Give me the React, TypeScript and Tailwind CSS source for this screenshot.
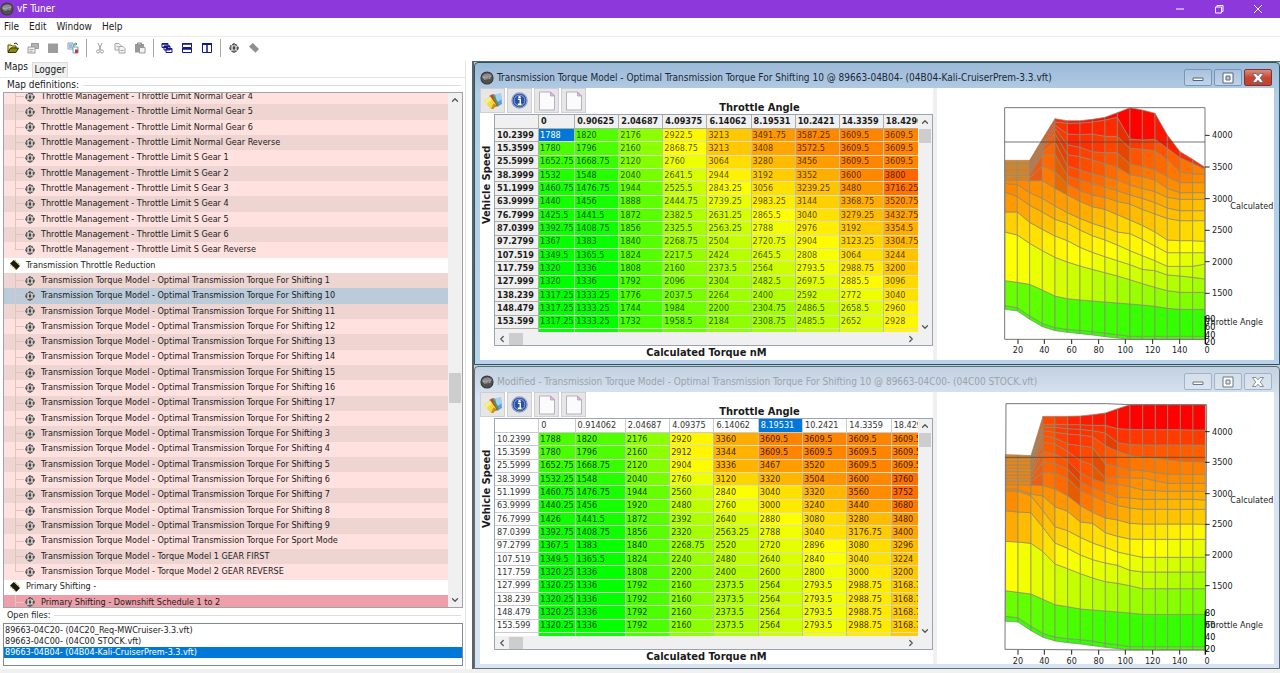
import React from 'react';
import clsx from 'clsx';
import { ChevronDown, ChevronLeft, ChevronRight, ChevronUp } from 'lucide-react';

const LIMIT = 'Throttle Management - Throttle Limit';
const TORQUE = 'Transmission Torque Model - Optimal Transmission Torque For';

type Row = { label: string; tone: string; group?: boolean; last?: boolean };

const LIGHT = 'bg-[#ffe2e0]';
const DARK = 'bg-[#eed5d2]';

const stripe = (labels: string[], darkFirst: boolean): Row[] =>
  labels.map((label, i) => ({
    label,
    tone: (i % 2 === 0) === darkFirst ? DARK : LIGHT,
    last: i === labels.length - 1,
  }));

const treeRows: Row[] = [
  ...stripe(
    ['Normal Gear 4', 'Normal Gear 5', 'Normal Gear 6', 'Normal Gear Reverse', 'S Gear 1', 'S Gear 2', 'S Gear 3', 'S Gear 4', 'S Gear 5', 'S Gear 6', 'S Gear Reverse'].map(
      (s) => `${LIMIT} ${s}`
    ),
    false
  ),
  { label: 'Transmission Throttle Reduction', tone: 'bg-white', group: true },
  ...stripe(
    [
      ...['1', '10', '11', '12', '13', '14', '15', '16', '17', '2', '3', '4', '5', '6', '7', '8', '9'].map((n) => `${TORQUE} Shifting ${n}`),
      `${TORQUE} Sport Mode`,
      'Transmission Torque Model - Torque Model 1 GEAR FIRST',
      'Transmission Torque Model - Torque Model 2 GEAR REVERSE',
    ],
    true
  ),
  { label: 'Primary Shifting -', tone: 'bg-white', group: true },
  { label: 'Primary Shifting - Downshift Schedule 1 to 2', tone: 'bg-[#eea0aa]' },
];

const SELECTED_ROW = `${TORQUE} Shifting 10`;

const openFiles = ['89663-04C20- (04C20_Req-MWCruiser-3.3.vft)', '89663-04C00- (04C00 STOCK.vft)', '89663-04B04- (04B04-Kali-CruiserPrem-3.3.vft)'];

const speeds = ['10.2399', '15.3599', '25.5999', '38.3999', '51.1999', '63.9999', '76.7999', '87.0399', '97.2799', '107.519', '117.759', '127.999', '138.239', '148.479', '153.599'];

const tunedMap = {
  angles: ['0', '0.90625', '2.04687', '4.09375', '6.14062', '8.19531', '10.2421', '14.3359', '18.4296'],
  values: [
    [1788, 1820, 2176, 2922.5, 3213, 3491.75, 3587.25, 3609.5, 3609.5],
    [1780, 1796, 2160, 2868.75, 3213, 3408, 3572.5, 3609.5, 3609.5],
    [1652.75, 1668.75, 2120, 2760, 3064, 3280, 3456, 3609.5, 3609.5],
    [1532, 1548, 2040, 2641.5, 2944, 3192, 3352, 3600, 3800],
    [1460.75, 1476.75, 1944, 2525.5, 2843.25, 3056, 3239.25, 3480, 3716.25],
    [1440, 1456, 1888, 2444.75, 2739.25, 2983.25, 3144, 3368.75, 3520.75],
    [1425.5, 1441.5, 1872, 2382.5, 2631.25, 2865.5, 3040, 3279.25, 3432.75],
    [1392.75, 1408.75, 1856, 2325.5, 2563.25, 2788, 2976, 3192, 3354.5],
    [1367, 1383, 1840, 2268.75, 2504, 2720.75, 2904, 3123.25, 3304.75],
    [1349.5, 1365.5, 1824, 2217.5, 2424, 2645.5, 2808, 3064, 3244],
    [1320, 1336, 1808, 2160, 2373.5, 2564, 2793.5, 2988.75, 3200],
    [1320, 1336, 1792, 2096, 2304, 2482.5, 2697.5, 2885.5, 3096],
    [1317.25, 1333.25, 1776, 2037.5, 2264, 2400, 2592, 2772, 3040],
    [1317.25, 1333.25, 1744, 1984, 2200, 2304.75, 2486.5, 2658.5, 2960],
    [1317.25, 1333.25, 1732, 1958.5, 2184, 2308.75, 2485.5, 2652, 2928],
  ],
};

const stockMap = {
  angles: ['0', '0.914062', '2.04687', '4.09375', '6.14062', '8.19531', '10.2421', '14.3359', '18.4296'],
  values: [
    [1788, 1820, 2176, 2920, 3360, 3609.5, 3609.5, 3609.5, 3609.5],
    [1780, 1796, 2160, 2912, 3344, 3609.5, 3609.5, 3609.5, 3609.5],
    [1652.75, 1668.75, 2120, 2904, 3336, 3467, 3520, 3609.5, 3609.5],
    [1532.25, 1548, 2040, 2760, 3120, 3320, 3504, 3600, 3760],
    [1460.75, 1476.75, 1944, 2560, 2840, 3040, 3320, 3560, 3752],
    [1440.25, 1456, 1920, 2480, 2760, 3000, 3240, 3440, 3680],
    [1426, 1441.5, 1872, 2392, 2640, 2880, 3080, 3280, 3480],
    [1392.75, 1408.75, 1856, 2320, 2563.25, 2788, 3040, 3176.75, 3400],
    [1367.5, 1383, 1840, 2268.75, 2520, 2720, 2896, 3080, 3296],
    [1349.5, 1365.5, 1824, 2240, 2480, 2640, 2840, 3040, 3224],
    [1320.25, 1336, 1808, 2200, 2400, 2600, 2800, 3000, 3200],
    [1320.25, 1336, 1792, 2160, 2373.5, 2564, 2793.5, 2988.75, 3168.75],
    [1320.25, 1336, 1792, 2160, 2373.5, 2564, 2793.5, 2988.75, 3168.75],
    [1320.25, 1336, 1792, 2160, 2373.5, 2564, 2793.5, 2988.75, 3168.75],
    [1320.25, 1336, 1792, 2160, 2373.5, 2564, 2793.5, 2988.75, 3168.75],
  ],
};

// green at 1320 Nm, yellow around 2870, red at 4420
const heat = (value: number) => {
  const hue = Math.max(0, Math.min(120, 120 - ((value - 1320) / 3100) * 120));
  return `hsl(${Math.round(hue)} 100% 50%)`;
};

type Surface = {
  xs: number[];
  curves: number[][];
  hues: number[][];
  frame: string;
  cut: string;
  ticks: [string, number][];
  depth: [string, number][];
  axisY: number;
  nameY: number;
  depthNameY: number;
};

// Each curve is one throttle line, listed bottom to top; units are thirds of a pixel.
const tunedSurface: Surface = {
  xs: [45, 82, 119, 157, 195, 232, 270, 307, 345, 382, 420, 457, 495, 532, 570, 608, 645],
  curves: [
    [748, 753, 778, 800, 812, 817, 821, 825, 830, 834, 838, 838, 838, 838, 838, 838, 838],
    [737, 743, 768, 790, 803, 808, 811, 815, 819, 824, 829, 829, 829, 829, 829, 829, 829],
    [662, 667, 673, 690, 708, 716, 720, 723, 726, 729, 732, 735, 739, 745, 748, 748, 748],
    [516, 525, 550, 572, 592, 606, 618, 628, 638, 648, 659, 671, 682, 692, 697, 697, 697],
    [456, 456, 487, 508, 528, 542, 562, 577, 590, 602, 614, 628, 632, 645, 648, 652, 657],
    [396, 410, 436, 456, 478, 490, 510, 527, 540, 555, 572, 587, 602, 619, 619, 619, 612],
    [370, 374, 398, 415, 438, 458, 475, 490, 502, 516, 521, 538, 558, 578, 578, 578, 578],
    [360, 360, 362, 362, 385, 405, 424, 440, 448, 464, 480, 496, 516, 540, 542, 542, 544],
    [353, 353, 353, 318, 335, 372, 392, 405, 412, 424, 432, 448, 462, 475, 482, 482, 482],
    [345, 345, 345, 283, 283, 348, 360, 370, 382, 392, 405, 415, 428, 444, 452, 452, 452],
    [337, 337, 337, 275, 245, 318, 330, 342, 350, 360, 375, 385, 395, 412, 418, 418, 418],
    [330, 330, 330, 268, 220, 284, 290, 300, 312, 322, 345, 350, 360, 385, 398, 398, 398],
    [323, 323, 323, 262, 205, 254, 262, 275, 278, 278, 312, 320, 330, 350, 368, 368, 368],
    [316, 316, 316, 255, 195, 222, 224, 222, 229, 229, 265, 268, 272, 300, 336, 342, 342],
    [309, 309, 309, 247, 186, 190, 189, 186, 180, 172, 237, 240, 238, 265, 293, 310, 328],
    [301, 301, 301, 238, 176, 182, 182, 178, 172, 158, 143, 150, 160, 225, 275, 298, 322],
  ],
  hues: [
    [106, 110, 106, 103],
    [95, 103, 107, 108],
    [60, 72, 84, 91],
    [49, 60, 71, 82],
    [36, 53, 65, 74],
    [32, 46, 58, 68],
    [31, 38, 53, 62],
    [30, 28, 44, 53],
    [30, 22, 40, 48],
    [30, 18, 36, 45],
    [30, 14, 32, 41],
    [30, 12, 26, 37],
    [30, 9, 20, 33],
    [30, 6, 13, 30],
    [30, 5, 0, 12],
  ],
  frame: 'M44 143H645V838H44Z',
  cut: 'M44 246H645',
  ticks: [['4000', 226], ['3500', 321], ['3000', 416], ['2500', 511], ['2000', 605], ['1500', 700]],
  depth: [['80', 776], ['60', 801], ['40', 825], ['20', 847]],
  axisY: 838,
  nameY: 438,
  depthNameY: 787,
};

const stockSurface: Surface = {
  xs: [46, 84, 123, 159, 195, 233, 271, 308, 346, 383, 420, 458, 496, 533, 571, 609, 646],
  curves: [
    [772, 774, 800, 820, 831, 836, 840, 845, 850, 854, 858, 858, 858, 858, 858, 858, 858],
    [757, 761, 787, 808, 819, 824, 827, 831, 838, 842, 848, 848, 848, 848, 848, 848, 848],
    [680, 685, 690, 706, 722, 728, 735, 738, 741, 744, 747, 751, 751, 751, 751, 751, 751],
    [532, 534, 538, 563, 600, 614, 629, 642, 653, 658, 665, 674, 674, 674, 674, 674, 674],
    [440, 444, 446, 490, 537, 553, 573, 587, 597, 604, 619, 624, 624, 624, 624, 624, 624],
    [380, 382, 395, 440, 488, 500, 520, 537, 550, 564, 572, 580, 580, 580, 580, 580, 580],
    [374, 376, 390, 396, 428, 442, 474, 478, 506, 517, 525, 526, 526, 526, 526, 526, 526],
    [362, 362, 363, 365, 375, 395, 425, 445, 462, 468, 478, 480, 480, 480, 480, 480, 481],
    [352, 352, 352, 325, 328, 343, 380, 395, 412, 424, 432, 436, 436, 436, 436, 436, 436],
    [343, 343, 343, 293, 300, 315, 355, 372, 385, 400, 402, 406, 406, 406, 406, 406, 408],
    [333, 333, 333, 262, 270, 290, 328, 345, 358, 362, 368, 378, 380, 382, 382, 382, 382],
    [323, 323, 323, 235, 240, 262, 290, 303, 342, 340, 342, 342, 350, 358, 358, 358, 358],
    [313, 313, 313, 215, 222, 240, 245, 250, 300, 308, 318, 320, 325, 331, 331, 331, 331],
    [303, 303, 303, 200, 205, 210, 213, 218, 245, 262, 275, 280, 282, 287, 292, 293, 294],
    [292, 292, 292, 190, 190, 194, 196, 200, 207, 236, 242, 243, 243, 243, 243, 243, 244],
    [282, 282, 282, 182, 182, 182, 182, 184, 184, 194, 196, 197, 197, 197, 197, 198, 198],
    [272, 273, 275, 157, 157, 157, 156, 152, 147, 134, 122, 122, 122, 122, 122, 122, 122],
  ],
  hues: [
    [106, 110, 106, 103],
    [95, 103, 107, 108],
    [60, 74, 84, 91],
    [40, 62, 72, 82],
    [33, 54, 65, 74],
    [31, 48, 58, 66],
    [31, 36, 52, 58],
    [31, 24, 44, 48],
    [31, 20, 40, 45],
    [31, 17, 37, 41],
    [31, 15, 34, 37],
    [31, 13, 31, 34],
    [31, 11, 28, 30],
    [31, 10, 20, 22],
    [31, 9, 13, 14],
    [31, 8, 0, 0],
  ],
  frame: 'M48 119H350L420 122H650L646 858H350L45 856Z',
  cut: 'M46 280H646',
  ticks: [['4000', 203], ['3500', 295], ['3000', 389], ['2500', 481], ['2000', 573], ['1500', 665]],
  depth: [['80', 748], ['60', 783], ['40', 819], ['20', 856]],
  axisY: 858,
  nameY: 409,
  depthNameY: 783,
};

const speedTicks: [string, number][] = [['20', 84], ['40', 163], ['60', 245], ['80', 326], ['100', 406], ['120', 488], ['140', 569]];

const cellHue = (stops: number[], col: number) => {
  const t = Math.min(col, 15) / 5;
  const i = Math.min(2, Math.floor(t));
  return Math.round(stops[i] + (stops[i + 1] - stops[i]) * (t - i));
};

function SurfaceChart({ surface, label }: { surface: Surface; label: string }) {
  const { xs, curves, hues } = surface;
  const px = (x: number) => 53 + x / 3;
  const py = (y: number) => y / 3 - 28;
  return (
    <svg viewBox="0 0 337 272" preserveAspectRatio="xMidYMin meet" className="block h-full w-full overflow-hidden text-[9px]" role="img" aria-label={label}>
      <g transform="translate(53 -28) scale(0.33333)" strokeLinejoin="round">
        {hues.map((stops, band) =>
          xs.slice(0, -1).map((x, col) => {
            const low = curves[band];
            const high = curves[band + 1];
            const slope = (high[col + 1] - high[col]) / (xs[col + 1] - x);
            const early = band > 6 && col < 3;
            const hue = early ? stops[0] - (col === 2 ? 10 : 0) : cellHue(stops, col);
            const steep = slope > 0.75 && band > 6 && col < 10;
            return (
              <polygon
                key={`${band}-${col}`}
                points={`${x},${low[col]} ${xs[col + 1]},${low[col + 1]} ${xs[col + 1]},${high[col + 1]} ${x},${high[col]}`}
                fill={`hsl(${hue} ${early ? 85 : 100}% ${steep ? 45 : 50}%)`}
                stroke="#8a8a74"
                strokeWidth="2.2"
              />
            );
          })
        )}
        <path d={surface.frame} fill="none" stroke="#777" strokeWidth="3" />
        <path d={surface.cut} fill="none" stroke="#444" strokeOpacity="0.75" strokeWidth="3" />
        {surface.ticks.map(([t, y]) => (
          <path key={t} d={`M645 ${y}h14`} stroke="#222" strokeWidth="3" />
        ))}
        {speedTicks.map(([t, x]) => (
          <path key={t} d={`M${x} ${surface.axisY}v14`} stroke="#222" strokeWidth="3" />
        ))}
        <path d={`M646 ${surface.depth[0][1] - 8}V${surface.axisY + 14}`} stroke="#111" strokeWidth="4" />
      </g>
      <g fill="#222">
        {surface.ticks.map(([t, y]) => (
          <text key={t} x={px(666)} y={py(y) + 3}>{t}</text>
        ))}
        {surface.depth.map(([t, y]) => (
          <text key={t} x={px(645)} y={py(y) + 3} fill="#000">{t}</text>
        ))}
        {speedTicks.map(([t, x]) => (
          <text key={t} x={px(x)} y={py(surface.axisY) + 14} textAnchor="middle">{t}</text>
        ))}
        <text x={px(651)} y={py(surface.axisY) + 14} textAnchor="middle">0</text>
        <text x={px(850)} y={py(surface.nameY) + 3} textAnchor="end">Calculated</text>
        <text x={px(647)} y={py(surface.depthNameY) + 3}>Throttle Angle</text>
      </g>
    </svg>
  );
}

function AppBadge() {
  return (
    <svg viewBox="0 0 14 14" className="size-3.5 shrink-0" aria-hidden="true">
      <circle cx="7" cy="7" r="6.6" fill="#3a3a3c" />
      <circle cx="7" cy="7" r="5.6" fill="#505052" />
      <path d="M2 5.5C4 2 9 1.5 12 4.5L11 6 3 8z" fill="#8b8b8d" />
      <path d="M3 6.2h2.5M4 8h2.5M7 5.5v2.8M8.500 6h2.500M8.500 7.600h1.800" stroke="#c4c4c6" strokeWidth="0.800" />
    </svg>
  );
}

function TargetIcon() {
  return (
    <svg viewBox="0 0 12 12" className="size-3 shrink-0" fill="none" aria-hidden="true">
      <circle cx="6" cy="6" r="3.8" fill="#d4d0d0" stroke="#5a5454" strokeWidth="1.300" strokeDasharray="2.200 0.900" />
      <path d="M6 1v2.500M6 8.500V11M1 6h2.500M8.500 6H11" stroke="#444" strokeWidth="1.100" />
      <path d="M6 4.300v3.400M4.800 6h2.400" stroke="#222" strokeWidth="1.200" />
    </svg>
  );
}

function ChipIcon({ muted }: { muted?: boolean }) {
  return (
    <svg viewBox="0 0 12 12" className="size-3 shrink-0" aria-hidden="true">
      <path d="M1 4.500 4.800 1 11 7 7.500 10.800z" fill={muted ? '#8e8e8e' : '#1a1a10'} />
      {!muted && <path d="M1.500 5.800 6.800 11M5.800 1.200l5.400 5" stroke="#b8b020" strokeWidth="1.100" strokeDasharray="1.200 1" />}
    </svg>
  );
}

const toolIcons: Record<string, React.ReactNode> = {
  Open: (
    <>
      <path d="M1 3h3l1 1h4v2H4L1 10z" fill="#f5ee7c" stroke="#4c4a00" />
      <path d="M1 10.500 3.500 6h8L9 10.500z" fill="#8c8a12" stroke="#3c3a00" />
      <path d="M7 2c1.500-1.500 3-1 3.500.8" fill="none" stroke="#222" />
    </>
  ),
  Properties: (
    <>
      <path d="M4.500 1.500h7v5h-7z" fill="#b4b4b4" stroke="#999" />
      <path d="M1 5h7v6H1z" fill="#eee" stroke="#999" />
      <path d="M2.500 7.500h4M2.500 9.300h3" stroke="#aaa" />
    </>
  ),
  Save: <path d="M1 1.500h10v9.500H1z" fill="#9c9c9c" />,
  Compare: (
    <>
      <path d="M1 1h5v6H1z" fill="#fff" stroke="#7a9cc8" />
      <path d="M6 5h5v6H6z" fill="#fff" stroke="#7a9cc8" />
      <path d="M2 3h3M2 5h3" stroke="#3d76b8" />
      <path d="M7 4.500V2h3M8.500.800 10 2 8.500 3.200" fill="none" stroke="#3f9a3f" />
      <path d="M8 7.500h3v3.500H8z" fill="#d03838" />
    </>
  ),
  Cut: (
    <g fill="none" stroke="#a0a0a0">
      <path d="M4 1l3 7M8 1 5 8" />
      <circle cx="4" cy="9.500" r="1.500" />
      <circle cx="8" cy="9.500" r="1.500" />
    </g>
  ),
  Copy: (
    <g fill="#f4f4f4" stroke="#a4a4a4">
      <path d="M1 1.500h4l2 2v4.500H1z" />
      <path d="M5 4.500h4l2 2V11H5z" />
      <path d="M2.500 4.500h2M6.500 8.500h3" />
    </g>
  ),
  Paste: (
    <>
      <path d="M1 2h9v8.500H1z" fill="#9a9a9a" />
      <path d="M3.500 1h4v2h-4z" fill="#ccc" stroke="#888" />
      <path d="M5.500 5.500h5.500V11H5.500z" fill="#f2f2f2" stroke="#999" />
    </>
  ),
  Cascade: (
    <g fill="#fff" stroke="#14148c">
      <path d="M1 1.500h6v4H1zM3 4h6v4H3zM5 6.500h6v4H5z" />
      <path d="M1 2h6M3 4.500h6M5 7h6" strokeWidth="1.500" />
    </g>
  ),
  'Tile horizontally': (
    <g fill="#fff" stroke="#14148c">
      <path d="M1.500 1.500h9v4h-9zM1.500 6.500h9v4h-9z" />
      <path d="M1 2h10M1 7h10" strokeWidth="1.500" />
    </g>
  ),
  'Tile vertically': (
    <g fill="#fff" stroke="#14148c">
      <path d="M1.500 1.500h4.500v9H1.500zM6 1.500h4.500v9H6z" />
      <path d="M1 2h10" strokeWidth="2" />
    </g>
  ),
};

const toolGroups = [
  ['Open', 'Properties', 'Save', 'Compare'],
  ['Cut', 'Copy', 'Paste'],
  ['Cascade', 'Tile horizontally', 'Tile vertically'],
  ['Target', 'Chip'],
];

function Toolbar() {
  return (
    <div className="flex h-[22px] shrink-0 items-center border-t border-[#ececec] pl-[3px]">
      {toolGroups.map((group, i) => (
        <React.Fragment key={group[0]}>
          {i > 0 && <span className="mx-[3px] h-[18px] w-px bg-[#a8a8a8]" />}
          {group.map((name) => (
            <button key={name} type="button" aria-label={name} className="flex h-5 w-5 items-center justify-center">
              {name === 'Target' && <TargetIcon />}
              {name === 'Chip' && <ChipIcon muted />}
              {toolIcons[name] && (
                <svg viewBox="0 0 12 12" className="size-3" aria-hidden="true">
                  {toolIcons[name]}
                </svg>
              )}
            </button>
          ))}
        </React.Fragment>
      ))}
    </div>
  );
}

function Sidebar() {
  return (
    <aside className="flex w-[466px] shrink-0 flex-col border-r border-[#e4e4e4]">
      <div className="flex h-[17px] shrink-0 items-end border-b border-[#e4e4e4] text-[10px] leading-none" role="tablist">
        <button type="button" role="tab" aria-selected="true" className="h-4 w-8 pb-1 text-center">Maps</button>
        <button type="button" role="tab" aria-selected="false" className="h-[15px] w-9 border border-b-0 border-[#dcdcdc] bg-[#f0f0f0]">Logger</button>
      </div>
      <h2 className="flex h-[14px] shrink-0 items-center pl-[7px] text-[10px] leading-none">
        Map definitions:<span className="mx-1 h-px flex-1 bg-[#dcdcdc]" />
      </h2>
      <div className="mr-0.5 ml-[3px] flex min-h-0 flex-1 border border-[#a0a4aa]">
        <div className="min-w-0 flex-1 overflow-hidden">
          <ul className="-mt-1 flex h-[521px] flex-col" role="tree" aria-label="Map definitions">
            {treeRows.map((row) => (
              <li
                key={row.label}
                role="treeitem"
                aria-selected={row.label === SELECTED_ROW}
                className={clsx('flex min-h-0 flex-1 items-center whitespace-nowrap', row.label === SELECTED_ROW ? 'bg-[#bccbda]' : row.tone)}
              >
                {row.group ? (
                  <>
                    <span className="mx-[5px] flex"><ChipIcon /></span>
                    {row.label}
                  </>
                ) : (
                  <>
                    <span className={clsx('ml-[11px] w-px self-start bg-[#e0c4c2]', row.last ? 'h-1/2' : 'h-full')} />
                    <span className="h-px w-2 bg-[#e0c4c2]" />
                    <TargetIcon />
                    <span className="ml-[5px]">{row.label}</span>
                  </>
                )}
              </li>
            ))}
          </ul>
        </div>
        <div className="flex w-[14px] shrink-0 flex-col items-center bg-[#f0f0f0] py-0.5">
          <ChevronUp size={10} strokeWidth={3} color="#555" />
          <div className="mt-[268px] h-[30px] w-3 bg-[#cdcdcd]" />
          <ChevronDown size={10} strokeWidth={3} color="#555" className="mt-auto" />
        </div>
      </div>
      <h2 className="flex h-[15px] shrink-0 items-center pl-[7px] leading-none">
        Open files:<span className="mx-1 h-px flex-1 bg-[#dcdcdc]" />
      </h2>
      <ul className="mr-0.5 mb-[3px] ml-[3px] h-[43px] shrink-0 border border-[#828790] pt-px" role="listbox" aria-label="Open files">
        {openFiles.map((file, i) => (
          <li
            key={file}
            role="option"
            aria-selected={i === 2}
            className={clsx('h-[11px] pl-px leading-[11px]', i === 2 && 'bg-[#0078d7] text-white')}
          >
            {file}
          </li>
        ))}
      </ul>
    </aside>
  );
}

type MapData = typeof tunedMap;

function MapTable({ map, active }: { map: MapData; active: boolean }) {
  const line = active ? 'border-[#a9b0a9]' : 'border-[#c9ccd2]';
  return (
    <div className="flex min-h-0 min-w-0 flex-1 flex-col border border-[#9aa4b4] bg-[#f0f0f0]">
      <div className="flex h-[217px] shrink-0">
        <div className="min-w-0 flex-1 overflow-hidden">
          <table className={clsx('h-[217px] table-fixed border-separate border-spacing-0 leading-none', active ? 'w-[433px]' : 'w-[441px]')}>
            <colgroup>
              <col className="w-[44px]" />
              <col className="w-[36px]" />
              <col className={active ? 'w-[44px]' : 'w-[50px]'} />
              {map.angles.slice(2).map((a) => (
                <col key={a} className="w-[44px]" />
              ))}
            </colgroup>
            <thead>
              <tr className="h-[14px]">
                <th className={clsx('border-b border-r p-0', line, !active && 'bg-white')} />
                {map.angles.map((a, i) => (
                  <th
                    key={a}
                    scope="col"
                    className={clsx(
                      'overflow-hidden whitespace-nowrap border-b border-r p-0 pl-0.5 text-left',
                      line,
                      active ? 'bg-[#f0f0f0] font-bold' : i === 5 ? 'bg-[#0078d7] font-normal text-white' : 'bg-white font-normal text-[#333]'
                    )}
                  >
                    {a}
                  </th>
                ))}
              </tr>
            </thead>
            <tbody>
              {map.values.map((row, r) => (
                <tr key={speeds[r]}>
                  <th
                    scope="row"
                    className={clsx('border-b border-r p-0 pl-0.5 text-left', line, active ? 'bg-[#f0f0f0] font-bold' : 'bg-white font-normal text-[#333]')}
                  >
                    {speeds[r]}
                  </th>
                  {row.map((v, c) => {
                    const picked = active && r === 0 && c === 0;
                    return (
                      <td
                        key={c}
                        className={clsx(
                          'overflow-hidden whitespace-nowrap border-b border-r border-b-[#d8dccc] border-r-[#b8c0b0] p-0 pl-px',
                          picked ? 'text-white' : active ? 'text-black/70' : 'text-black/80'
                        )}
                        style={{ backgroundColor: picked ? '#0078d7' : heat(v) }}
                      >
                        {v}
                      </td>
                    );
                  })}
                </tr>
              ))}
              <tr className="h-[3px]">
                <th className={clsx('border-r p-0', line, !active && 'bg-white')} />
                {map.values[14].map((v, c) => (
                  <td key={c} className="border-r border-r-[#b8c0b0] p-0" style={{ backgroundColor: heat(v) }} />
                ))}
              </tr>
            </tbody>
          </table>
        </div>
        <div className="flex w-[14px] shrink-0 flex-col items-center pt-0.5">
          <ChevronUp size={10} strokeWidth={3} color="#555" />
          <div className="mt-0.5 h-[14px] w-3 bg-[#cdcdcd]" />
          <ChevronDown size={10} strokeWidth={3} color="#555" className="mt-auto" />
        </div>
      </div>
      <div className="flex min-h-0 flex-1 items-center pr-4 pl-0.5">
        <ChevronLeft size={10} strokeWidth={3} color="#555" />
        <div className="ml-0.5 h-3 w-[14px] bg-[#cdcdcd]" />
        <ChevronRight size={10} strokeWidth={3} color="#555" className="ml-auto" />
      </div>
    </div>
  );
}

function PaletteIcon() {
  return (
    <svg viewBox="0 0 22 20" className="h-5 w-[22px]" aria-hidden="true">
      <path d="M10 4 19 2.500 20 13 15 16z" fill="#5b9be6" />
      <path d="M13 3l6-.5.500 6-5 3z" fill="#a4d0f8" />
      <path d="M7 5 11 3 16.500 14 13.500 16z" fill="#d8382c" />
      <path d="M10 4 12 3.500 17 14 15.500 15.500z" fill="#4c9c4c" />
      <path d="M2 10 8 5 14 13.500 9 18z" fill="#f6d93a" />
      <path d="M2.500 10 8 5.500l2 3L4.500 13z" fill="#fbef8c" />
      <path d="M11.500 12.500l3 1.500-3 4L9 18z" fill="#c79320" />
    </svg>
  );
}

function InfoIcon() {
  return (
    <svg viewBox="0 0 18 18" className="size-[17px]" aria-hidden="true">
      <circle cx="9" cy="9" r="8" fill="#1c3f94" stroke="#8fa0c4" strokeWidth="1.500" />
      <circle cx="9" cy="9" r="5.800" fill="#2450b4" stroke="#c8d4f0" strokeWidth="0.800" />
      <circle cx="9" cy="5.500" r="1.300" fill="#fff" />
      <path d="M7.300 7.800h2.500v5M7.200 13h3.900" stroke="#fff" strokeWidth="1.500" fill="none" />
    </svg>
  );
}

function PageIcon() {
  return (
    <svg viewBox="0 0 18 20" className="h-5 w-[18px]" aria-hidden="true">
      <path d="M1.500 1h11l4 4v14h-15z" fill="#fbfbfb" stroke="#b4b4b8" />
      <path d="M12.500 1v4h4z" fill="#e0b8e4" stroke="#b890c0" strokeWidth="0.700" />
    </svg>
  );
}

function MapWindow({ title, map, surface, active }: { title: string; map: MapData; surface: Surface; active: boolean }) {
  const glass = active ? 'from-[#a9c3df] to-[#c0d4ea] border-[#7d95b4]' : 'from-[#d4dfea] to-[#dbe5f0] border-[#a3b2c6]';
  const mark = active ? 'stroke-[#56657c]' : 'stroke-[#6d7785]';
  return (
    <section
      className={clsx(
        'flex min-h-0 flex-1 flex-col rounded-t-[4px] border bg-gradient-to-b px-[5px] pb-1',
        active ? 'border-[#1f5c62] from-[#9cb9d8] via-[#b4cde6] via-10% to-[#b9d1ea]' : 'border-[#5f6b76] from-[#c3d1e0] via-[#d7e4f2] via-10% to-[#d7e4f2]'
      )}
    >
      <header className="flex h-[25px] shrink-0 items-center pt-1">
        <AppBadge />
        <h1 className={clsx('ml-[3px] flex-1 text-[10px] leading-none', active ? 'text-[#1c2733]' : 'text-[#9aa3ad]')}>{title}</h1>
        <div className="mr-0.5 flex gap-0.5">
          <button type="button" aria-label="Minimize" className={clsx('flex h-[17px] w-7 items-center justify-center rounded-[2px] border bg-gradient-to-b', glass)}>
            <svg viewBox="0 0 12 12" className="size-3" aria-hidden="true">
              <path d="M1 6h10v2.500H1z" fill="#fff" className={mark} />
            </svg>
          </button>
          <button type="button" aria-label="Maximize" className={clsx('flex h-[17px] w-7 items-center justify-center rounded-[2px] border bg-gradient-to-b', glass)}>
            <svg viewBox="0 0 12 12" className="size-3" aria-hidden="true">
              <path d="M1 1h10v10H1zM4 4v4h4V4z" fill="#fff" fillRule="evenodd" className={mark} />
            </svg>
          </button>
          <button
            type="button"
            aria-label="Close"
            className={clsx('flex h-[17px] w-7 items-center justify-center rounded-[2px] border bg-gradient-to-b', active ? 'border-[#7a3434] from-[#dc8a7c] via-[#c84632] to-[#c0432e]' : glass)}
          >
            <svg viewBox="0 0 14 12" className="h-3 w-3.5" aria-hidden="true">
              <path d="M1.500 1.500H5l2 2.300 2-2.300h3.500L9.300 6l3.200 4.500H9L7 8.200l-2 2.300H1.500L4.700 6z" fill="#fff" strokeWidth="0.800" className={mark} />
            </svg>
          </button>
        </div>
      </header>
      <div className="flex min-h-0 flex-1 overflow-hidden bg-white">
        <div className="flex w-[453px] shrink-0 flex-col">
          <div className="flex h-[26px] shrink-0">
            <div className="flex gap-0.5">
              {['Colours', 'Information', 'Page 1', 'Page 2'].map((name, i) => (
                <button key={name} type="button" aria-label={name} className="flex h-[25px] w-[25px] items-center justify-center border border-[#cfcfd2] bg-[#e6e6e8]">
                  {i === 0 ? <PaletteIcon /> : i === 1 ? <InfoIcon /> : <PageIcon />}
                </button>
              ))}
            </div>
            <h2 className="flex-1 self-end text-center text-[11px] font-bold leading-[12px]">Throttle Angle</h2>
          </div>
          <div className="flex min-h-0 flex-1">
            <div className="flex w-[14px] shrink-0 justify-center pt-8">
              <span className="h-[78px] rotate-180 whitespace-nowrap text-center text-[11px] font-bold leading-[14px] [writing-mode:vertical-rl]">Vehicle Speed</span>
            </div>
            <MapTable map={map} active={active} />
          </div>
          <p className="h-[14px] shrink-0 text-center text-[11px] font-bold leading-[14px]">Calculated Torque nM</p>
        </div>
        <div className="w-1 shrink-0 bg-[#f0f0f0]" />
        <div className="min-w-0 flex-1">
          <SurfaceChart surface={surface} label={title} />
        </div>
      </div>
    </section>
  );
}

export default function App() {
  return (
    <div className="flex h-screen flex-col overflow-hidden bg-white font-['DejaVu_Sans_Condensed','DejaVu_Sans',sans-serif] text-[9px] text-[#1a1a1a]">
      <header className="flex h-[18px] shrink-0 items-center bg-[#8c38da] pr-[3px] text-white">
        <AppBadge />
        <span className="ml-[3px] flex-1 text-[10px] leading-none">vF Tuner</span>
        <button type="button" aria-label="Minimize" className="flex h-full w-[39px] items-center justify-center">
          <svg viewBox="0 0 10 10" className="size-2.5" aria-hidden="true"><path d="M1 5h8" stroke="#fff" /></svg>
        </button>
        <button type="button" aria-label="Restore" className="flex h-full w-[39px] items-center justify-center">
          <svg viewBox="0 0 10 10" className="size-2.5" fill="none" stroke="#fff" aria-hidden="true"><path d="M1.500 3h6v6h-6zM3 3V1.500h6v6H7.500" /></svg>
        </button>
        <button type="button" aria-label="Close" className="flex h-full w-[39px] items-center justify-center">
          <svg viewBox="0 0 10 10" className="size-2.5" aria-hidden="true"><path d="M1 1l8 8M9 1 1 9" stroke="#fff" /></svg>
        </button>
      </header>

      <nav className="flex h-[18px] shrink-0 items-center gap-[10px] pl-1 text-[10px] leading-none">
        {['File', 'Edit', 'Window', 'Help'].map((item) => (
          <button key={item} type="button">{item}</button>
        ))}
      </nav>

      <Toolbar />

      <div className="mt-[3px] flex min-h-0 flex-1">
        <Sidebar />
        <main className="ml-1.5 flex min-w-0 flex-1 flex-col gap-px border-t border-l-2 border-[#5a6468] bg-[#c5ced8]">
          <MapWindow active title="Transmission Torque Model - Optimal Transmission Torque For Shifting 10 @ 89663-04B04- (04B04-Kali-CruiserPrem-3.3.vft)" map={tunedMap} surface={tunedSurface} />
          <MapWindow active={false} title="Modified - Transmission Torque Model - Optimal Transmission Torque For Shifting 10 @ 89663-04C00- (04C00 STOCK.vft)" map={stockMap} surface={stockSurface} />
        </main>
      </div>
      <footer className="h-1 shrink-0 bg-[#f0f0f0]" />
    </div>
  );
}
